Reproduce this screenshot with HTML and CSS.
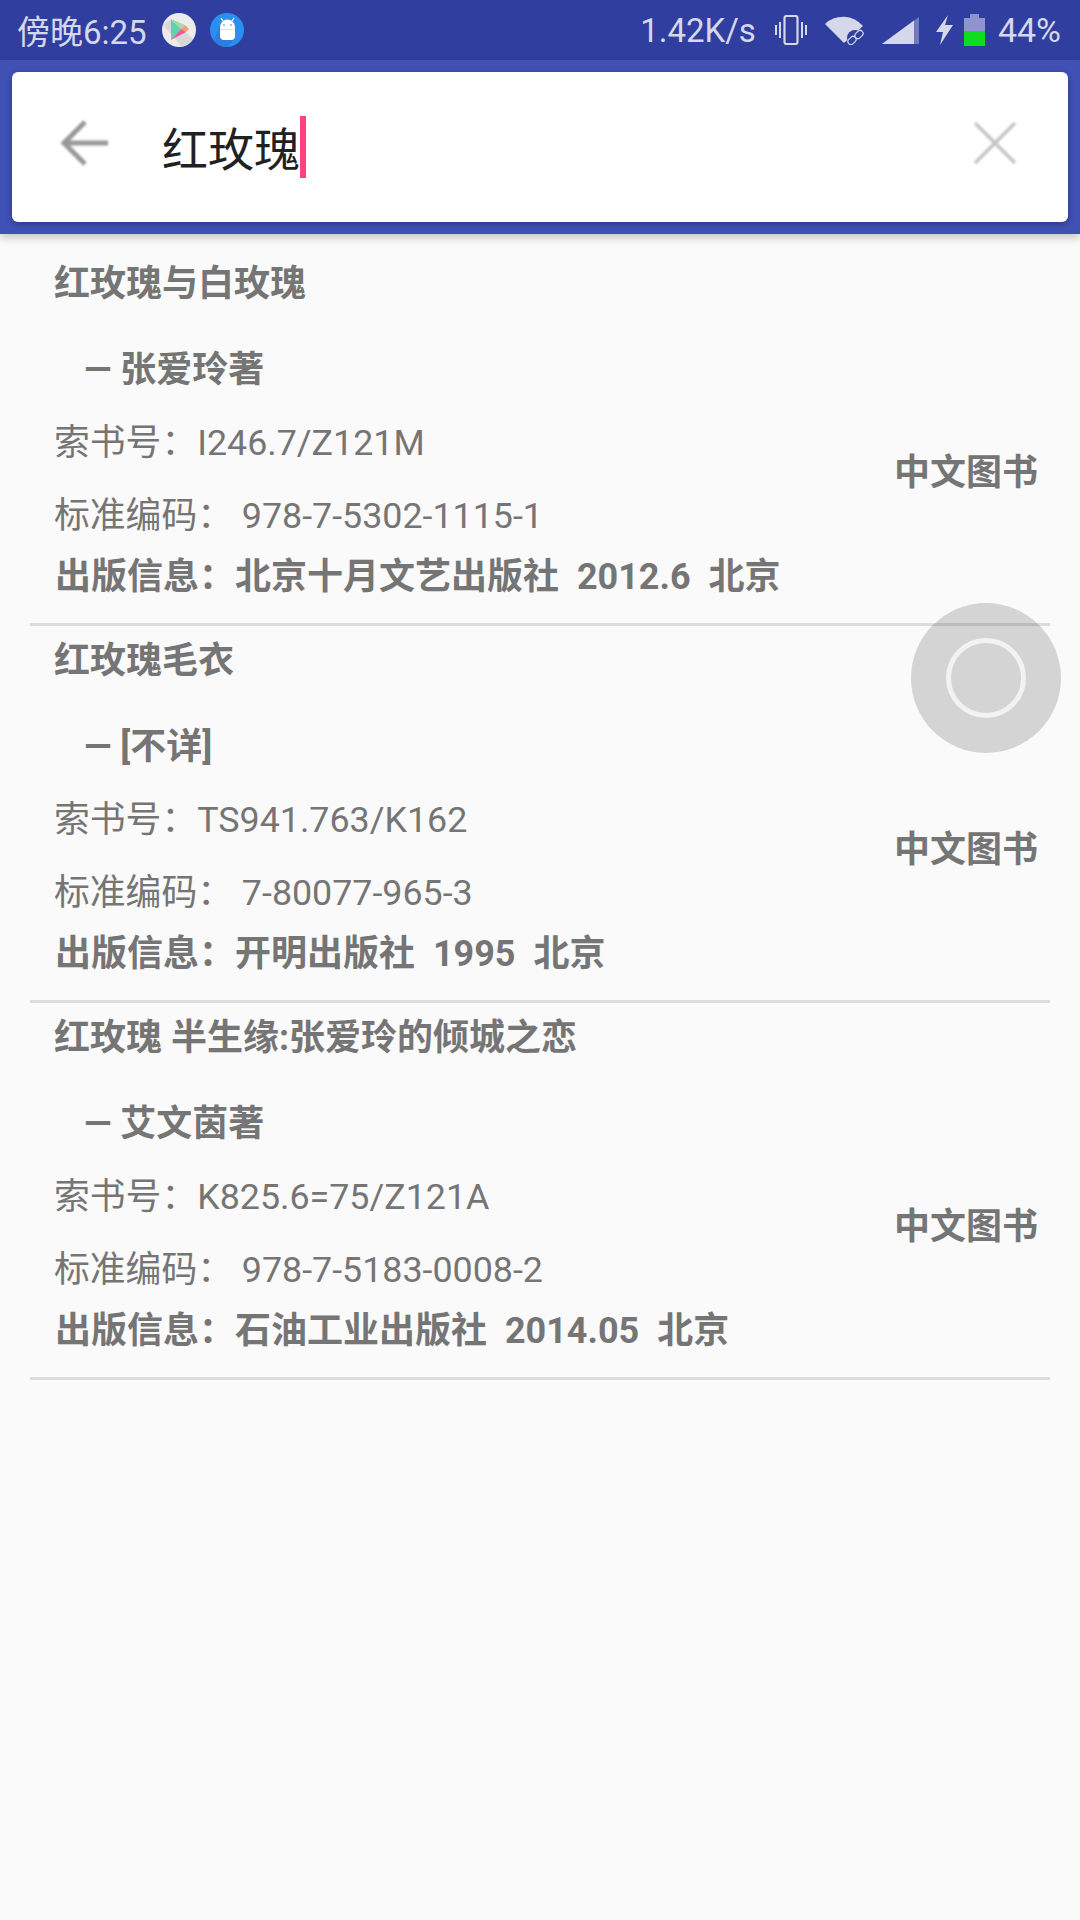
FILE: index.html
```html
<!DOCTYPE html>
<html lang="zh-CN">
<head>
  <meta charset="UTF-8" />
  <meta name="viewport" content="width=device-width, initial-scale=1.0">
  <title>搜索</title>
  <link rel="stylesheet" href="styles.css">
</head>
<body>
  <header class="status-bar">
    <div class="status-left">
      <span class="status-time">傍晚6:25</span>
      <svg class="notif-icon" viewBox="0 0 34 34">
        <circle cx="17" cy="17" r="17" fill="#ececec"/>
        <path d="M1 12 L9 6 L31 26 A17 17 0 0 1 20 33.7Z" fill="#d8d8d8"/>
        <path d="M9 6 L19 16 L9 27Z" fill="#5ed3ae"/>
        <path d="M9 6 L19 16 L23 12Z" fill="#a5dc9f"/>
        <path d="M19 16 L23 12 L27 16 L24 19Z" fill="#f79a77"/>
        <path d="M9 27 L19 16 L24 19Z" fill="#ec5a9b"/>
      </svg>
      <svg class="notif-icon" viewBox="0 0 34 34">
        <circle cx="17" cy="17" r="17" fill="#2b8fef"/>
        <path d="M10 12 L4 28 A17 17 0 0 0 17 34 L25 26Z" fill="#2a7fdc"/>
        <path d="M10 14 a7.5 7.5 0 0 1 15 0 v9 a4 4 0 0 1 -4 4 h-7 a4 4 0 0 1 -4 -4Z" fill="#fff"/>
        <path d="M11 5 L13 8 M24 5 L22 8" stroke="#fff" stroke-width="1.3"/>
        <path d="M10 16.5 H25" stroke="#d5e6f8" stroke-width="1"/>
        <path d="M13 12 h2 M20 12 h2" stroke="#2b8fef" stroke-width="1"/>
      </svg>
    </div>
    <div class="status-right">
      <span class="net-speed">1.42K/s</span>
      <svg class="vibrate-icon" viewBox="0 0 32 30">
        <rect x="9.5" y="1" width="13" height="28" rx="2" fill="none" stroke="#d5d8ea" stroke-width="2.2"/>
        <path d="M5 7 V23 M1 10 V20 M27 7 V23 M31 10 V20" stroke="#d5d8ea" stroke-width="2"/>
      </svg>
      <svg class="wifi-icon" viewBox="0 0 40 30">
        <path d="M0 9 A26 26 0 0 1 38 11 L19 28Z" fill="#d5d8ea"/>
        <circle cx="30" cy="23" r="8" fill="#303f9f"/>
        <rect x="31" y="15" width="6" height="9" rx="3" fill="none" stroke="#d5d8ea" stroke-width="1.2" transform="rotate(45 34 19.5)"/>
        <rect x="24" y="21" width="6" height="9" rx="3" fill="none" stroke="#d5d8ea" stroke-width="1.2" transform="rotate(45 27 25.5)"/>
      </svg>
      <svg class="signal-icon" viewBox="0 0 37 27">
        <path d="M0 27 L37 0 V27Z" fill="#6f7abf"/>
        <path d="M0 27 L32 3.6 V27Z" fill="#d5d8ea"/>
      </svg>
      <svg class="bolt-icon" viewBox="0 0 17 30">
        <path d="M12 0 L0 17 H7 L4 30 L17 10 H9Z" fill="#d5d8ea"/>
      </svg>
      <div class="battery">
        <div class="battery-cap"></div>
        <div class="battery-body">
          <div class="battery-level"></div>
        </div>
      </div>
      <span class="battery-text">44%</span>
    </div>
  </header>

  <div class="toolbar">
    <div class="search-card">
      <svg class="back-icon" viewBox="0 0 48 48">
        <path d="M48 24 H4 M25 3 L4 24 L25 45" fill="none" stroke="#999" stroke-width="5"/>
      </svg>
      <div class="search-input">
        <span class="search-text">红玫瑰</span>
        <span class="caret"></span>
      </div>
      <svg class="clear-icon" viewBox="0 0 42 42">
        <path d="M1 1 L41 41 M41 1 L1 41" stroke="#c4c4c4" stroke-width="3.5"/>
      </svg>
    </div>
  </div>

  <main class="result-list">
    <article class="book">
      <div class="book-info">
        <div class="book-title">红玫瑰与白玫瑰</div>
        <div class="book-author">— 张爱玲著</div>
        <div class="book-line call">索书号：I246.7/Z121M</div>
        <div class="book-line isbn">标准编码： 978-7-5302-1115-1</div>
        <div class="book-pub">出版信息：北京十月文艺出版社  2012.6  北京</div>
      </div>
      <div class="book-type">中文图书</div>
    </article>
    <article class="book">
      <div class="book-info">
        <div class="book-title">红玫瑰毛衣</div>
        <div class="book-author">— [不详]</div>
        <div class="book-line call">索书号：TS941.763/K162</div>
        <div class="book-line isbn">标准编码： 7-80077-965-3</div>
        <div class="book-pub">出版信息：开明出版社  1995  北京</div>
      </div>
      <div class="book-type">中文图书</div>
    </article>
    <article class="book">
      <div class="book-info">
        <div class="book-title">红玫瑰 半生缘:张爱玲的倾城之恋</div>
        <div class="book-author">— 艾文茵著</div>
        <div class="book-line call">索书号：K825.6=75/Z121A</div>
        <div class="book-line isbn">标准编码： 978-7-5183-0008-2</div>
        <div class="book-pub">出版信息：石油工业出版社  2014.05  北京</div>
      </div>
      <div class="book-type">中文图书</div>
    </article>
  </main>

  <div class="float-ball">
    <div class="float-ring"></div>
  </div>
</body>
</html>
```

FILE: styles.css
```css
* {
  box-sizing: border-box;
}

html,
body {
  height: 100%;
}

body {
  margin: 0;
  position: relative;
  overflow: hidden;
  background: #fafafa;
  font-family: Roboto, "Noto Sans CJK SC", sans-serif;
  color: #757575;
}

/* status bar */
.status-bar {
  height: 60px;
  background: #303f9f;
  color: #d5d8ea;
  display: flex;
  justify-content: space-between;
  align-items: center;
  padding: 0 19px 0 17px;
}

.status-left,
.status-right {
  display: flex;
  align-items: center;
}

.status-time {
  font-size: 33px;
  margin-right: 15px;
}

.notif-icon {
  width: 34px;
  height: 34px;
  margin-right: 14px;
}

.net-speed {
  font-size: 33px;
  margin-right: 19px;
}

.vibrate-icon {
  width: 32px;
  height: 30px;
  margin-right: 18px;
}

.wifi-icon {
  width: 40px;
  height: 30px;
  margin-right: 17px;
}

.signal-icon {
  width: 37px;
  height: 27px;
  margin-right: 17px;
}

.bolt-icon {
  width: 17px;
  height: 30px;
  margin-right: 11px;
}

.battery {
  width: 21px;
  display: flex;
  flex-direction: column;
  align-items: center;
  margin-right: 13px;
}

.battery-cap {
  width: 9px;
  height: 4px;
  background: #8d95cb;
}

.battery-body {
  width: 21px;
  height: 28px;
  background: #8d95cb;
  display: flex;
  align-items: flex-end;
}

.battery-level {
  width: 100%;
  height: 15px;
  background: #0edc1e;
}

.battery-text {
  font-size: 34px;
}

/* search bar */
.toolbar {
  height: 174px;
  background: #3f51b5;
  padding: 12px;
  box-shadow: 0 4px 8px rgba(0, 0, 0, 0.2);
  position: relative;
}

.search-card {
  height: 150px;
  background: #fff;
  border-radius: 6px;
  box-shadow: 0 2px 6px rgba(0, 0, 0, 0.3);
  display: flex;
  align-items: center;
  padding: 0 52px 0 48px;
}

.back-icon {
  width: 48px;
  height: 48px;
  margin-top: -8px;
  margin-right: 54px;
  filter: blur(0.8px);
}

.search-input {
  flex: 1;
  display: flex;
  align-items: center;
}

.search-text {
  font-size: 46px;
  line-height: 60px;
  margin-top: 5px;
  color: #212121;
}

.caret {
  width: 6px;
  height: 62px;
  background: #ff4081;
}

.clear-icon {
  width: 42px;
  height: 42px;
  margin-top: -8px;
  filter: blur(0.8px);
}

/* result list */
.result-list {
  padding: 15px 30px 0;
}

.book {
  height: 377px;
  display: flex;
  align-items: center;
  justify-content: space-between;
  border-bottom: 3px solid #dcdcdc;
  padding: 0 12px 0 24px;
}

.book-info {
  align-self: stretch;
  display: flex;
  flex-direction: column;
  white-space: pre;
}

.book-title,
.book-author,
.book-pub,
.book-type {
  font-size: 36px;
  font-weight: 700;
}

.book-title {
  height: 52px;
  line-height: 52px;
  margin-top: 9px;
}

.book-author {
  height: 52px;
  line-height: 52px;
  margin-top: 34px;
  padding-left: 30px;
}

.book-line {
  font-size: 35.8px;
  height: 52px;
  line-height: 52px;
}

.call {
  margin-top: 21px;
}

.isbn {
  margin-top: 21px;
}

.book-pub {
  height: 52px;
  line-height: 52px;
  margin-top: 9px;
  margin-left: 1px;
}

.book-type {
  margin-top: 66px;
}

/* floating ball */
.float-ball {
  position: absolute;
  left: 911px;
  top: 603px;
  width: 150px;
  height: 150px;
  border-radius: 50%;
  background: rgba(0, 0, 0, 0.15);
  display: flex;
  align-items: center;
  justify-content: center;
}

.float-ring {
  width: 80px;
  height: 80px;
  border: 5px solid #f2f2f2;
  border-radius: 50%;
}
```
